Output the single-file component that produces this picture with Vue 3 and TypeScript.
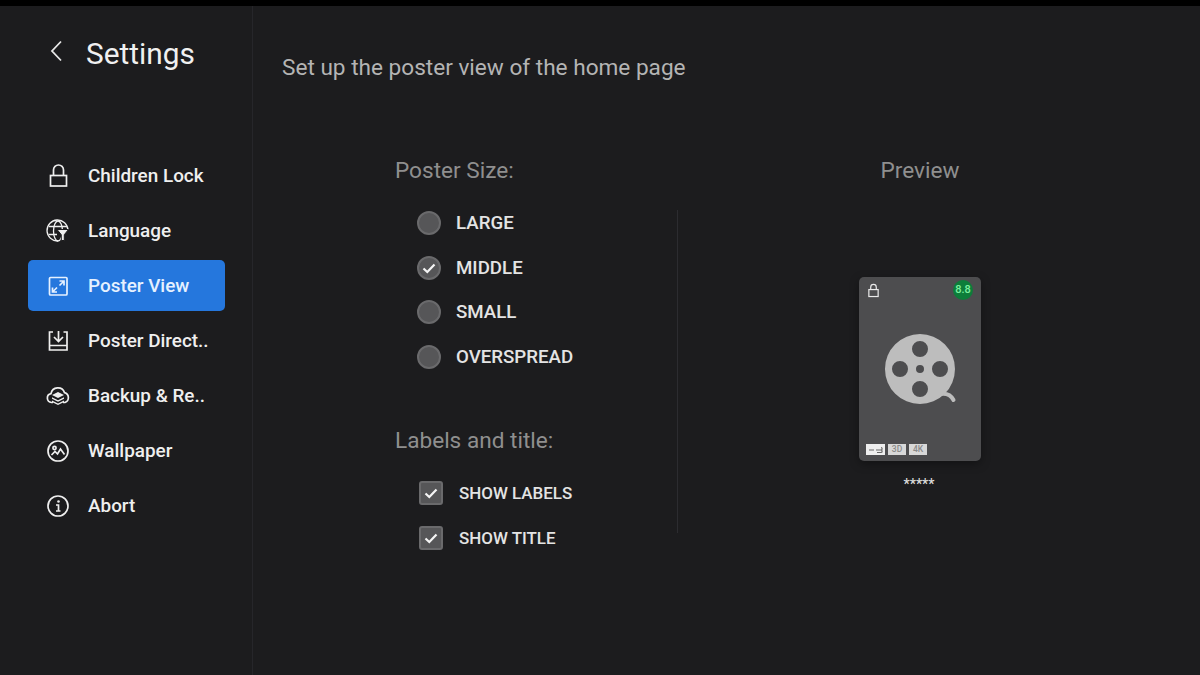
<script setup lang="ts">
interface MenuItem { label: string; icon: string; active?: boolean }
const menu: MenuItem[] = [
  { label: 'Children Lock', icon: 'lock' },
  { label: 'Language', icon: 'globe' },
  { label: 'Poster View', icon: 'expand', active: true },
  { label: 'Poster Direct..', icon: 'download' },
  { label: 'Backup & Re..', icon: 'cloud' },
  { label: 'Wallpaper', icon: 'picture' },
  { label: 'Abort', icon: 'info' },
]
const sizes = [
  { label: 'LARGE', checked: false },
  { label: 'MIDDLE', checked: true },
  { label: 'SMALL', checked: false },
  { label: 'OVERSPREAD', checked: false },
]
const labels = ['SHOW LABELS', 'SHOW TITLE']
</script>

<template>
  <div class="screen">
    <aside class="sidebar">
      <header class="head">
        <svg class="back" viewBox="0 0 14 24" width="14" height="24"><path d="M12 2.5 3 12l9 9.5" /></svg>
        <h1>Settings</h1>
      </header>
      <nav class="menu">
        <div v-for="item in menu" :key="item.label" class="item" :class="{ active: item.active }">
          <svg class="icon" viewBox="0 0 24 24" width="24" height="24">
            <g v-if="item.icon === 'lock'">
              <rect x="4.500" y="11.500" width="16" height="10.500" />
              <path d="M7.500 11.500V6a5 5 0 0 1 10 0v5.500" />
            </g>
            <g v-else-if="item.icon === 'globe'">
              <path d="M12 22a10.500 10.500 0 1 1 10-11" stroke-width="1.300" />
              <ellipse cx="12" cy="12" rx="4.500" ry="10" stroke-width="1.300" />
              <path d="M3 7.500h18M2.500 15.500H11" stroke-width="1.300" />
              <path class="knock" d="M11 10.500h11.500l-4.200 5.200v5.800h-3v-5.800z" />
            </g>
            <g v-else-if="item.icon === 'expand'">
              <rect x="3.500" y="3.500" width="17.500" height="17.500" rx="1" />
              <path d="M13.500 7h4.500v4.500M18 7l-4.500 4.500M11 18H6.500v-4.500M6.500 18l4.500-4.500" />
            </g>
            <g v-else-if="item.icon === 'download'">
              <path d="M7 3H3.500v18h17.500V3h-3.500" />
              <path d="M12.500 2v10M8 8l4.500 4.500L17 8M3.500 16.500h17.500" />
            </g>
            <g v-else-if="item.icon === 'cloud'">
              <path d="M7 18.500H5.500a4.500 4.500 0 0 1-.5-8.900 7 7 0 0 1 13.500-1 5.200 5.200 0 0 1 .5 9.900H17" />
              <path class="fill" d="m12 8 6 3-6 3-6-3zM6 13.200l6 3 6-3v1.600l-6 3-6-3zM6 16.600l6 3 6-3v1.400l-6 3-6-3z" />
            </g>
            <g v-else-if="item.icon === 'picture'">
              <circle cx="12" cy="12" r="10" />
              <circle cx="8.500" cy="9" r="1.600" />
              <path d="m5.500 16 3.500-3.500 2.500 2.500 3-5 4 5.500" />
            </g>
            <g v-else>
              <circle cx="12" cy="12" r="10" />
              <circle class="fill" cx="12.500" cy="7.500" r="1.300" />
              <path d="M10 11h2.500v5.500M10 17h4.500" />
            </g>
          </svg>
          <span>{{ item.label }}</span>
        </div>
      </nav>
    </aside>

    <main class="main">
      <h2 class="title">Set up the poster view of the home page</h2>
      <div class="columns">
        <section class="options">
          <h3>Poster Size:</h3>
          <ul class="radios">
            <li v-for="s in sizes" :key="s.label">
              <span class="radio">
                <svg v-if="s.checked" viewBox="0 0 24 24" width="24" height="24"><path class="tick" d="m6.500 12.500 3.800 3.500 7.200-7.500" /></svg>
              </span>
              <span>{{ s.label }}</span>
            </li>
          </ul>
          <h3 class="second">Labels and title:</h3>
          <ul class="checks">
            <li v-for="l in labels" :key="l">
              <span class="check">
                <svg viewBox="0 0 24 24" width="24" height="24"><path class="tick" d="m6.500 12.500 3.800 3.500 7.200-7.500" /></svg>
              </span>
              <span>{{ l }}</span>
            </li>
          </ul>
        </section>
        <section class="preview">
          <h3>Preview</h3>
          <div class="poster">
            <div class="poster-top">
              <svg viewBox="0 0 14 16" width="13" height="15" class="mini-lock">
                <rect x="2" y="7" width="10" height="7.500" />
                <path d="M4 7V4.500a3 3 0 0 1 6 0V7" />
              </svg>
              <span class="score">8.8</span>
            </div>
            <svg class="reel" viewBox="0 0 80 80" width="80" height="80">
              <path class="tail" d="M60 65c6-1 11 1 13.500 6" />
              <path fill-rule="evenodd" class="reel-body" d="M40 5a35 35 0 1 0 0 70 35 35 0 0 0 0-70zM40 12a8 8 0 1 1 0 16 8 8 0 0 1 0-16zM20 32a8 8 0 1 1 0 16 8 8 0 0 1 0-16zM60 32a8 8 0 1 1 0 16 8 8 0 0 1 0-16zM40 36a4 4 0 1 1 0 8 4 4 0 0 1 0-8zM40 52a8 8 0 1 1 0 16 8 8 0 0 1 0-16z" />
            </svg>
            <div class="tags">
              <span class="tag wide">
                <svg viewBox="0 0 18 10" width="18" height="10"><path d="M2 5h5M9 5h5c1.500 0 1.500-2.500 0-2.500M14 5c1.500 0 1.500 2.500 0 2.500H10" /></svg>
              </span>
              <span class="tag">3D</span>
              <span class="tag">4K</span>
            </div>
          </div>
          <div class="stars">*****</div>
        </section>
      </div>
    </main>
  </div>
</template>

<style>
html, body { margin: 0; background: #000; }
</style>

<style scoped>
.screen {
  width: 1200px;
  height: 675px;
  box-sizing: border-box;
  border-top: 6px solid #000;
  background: #1c1c1e;
  display: flex;
  overflow: hidden;
  font-family: Roboto, "Liberation Sans", sans-serif;
}
.sidebar {
  width: 253px;
  flex: none;
  box-sizing: border-box;
  border-right: 1px solid #26262a;
}
.head {
  height: 144px;
  box-sizing: border-box;
  padding: 32px 0 0 49px;
  display: flex;
  align-items: flex-start;
  gap: 23px;
}
.back { margin-top: 1px; fill: none; stroke: #e8e8e8; stroke-width: 1.800; }
h1 {
  margin: 0;
  font-size: 29.800px;
  line-height: 32px;
  font-weight: 400;
  color: #f0f0f0;
}
.menu { display: flex; flex-direction: column; gap: 4px; }
.item {
  width: 197px;
  height: 51px;
  margin-left: 28px;
  padding-left: 18px;
  box-sizing: border-box;
  border-radius: 5px;
  display: flex;
  align-items: center;
  gap: 18px;
  font-size: 18.900px;
  font-weight: 500;
  color: #efefef;
}
.item.active { background: #2577dd; color: #e6f1ff; }
.icon { flex: none; fill: none; stroke: currentColor; stroke-width: 1.700; }
.icon .fill { fill: currentColor; stroke: none; }
.icon .knock { fill: currentColor; stroke: #1c1c1e; stroke-width: 1; }
.main { flex: 1; min-width: 0; }
.title {
  margin: 47px 0 0 29px;
  font-size: 22.600px;
  line-height: 30px;
  font-weight: 400;
  color: #b4b4b4;
}
.columns { display: flex; margin: 74px 0 0 142px; }
h3 {
  margin: 0;
  font-size: 22.600px;
  line-height: 28px;
  font-weight: 400;
  color: #8f8f8f;
}
.options { width: 282px; flex: none; box-sizing: border-box; }
ul { list-style: none; margin: 0; padding: 0; }
.radios { margin-top: 16px; }
.radios li {
  height: 44.600px;
  display: flex;
  align-items: center;
  margin-left: 22px;
  gap: 15px;
  font-size: 18.700px;
  font-weight: 500;
  color: #e4e4e4;
}
.radio {
  width: 24px;
  height: 24px;
  box-sizing: border-box;
  border-radius: 50%;
  background: #565658;
  border: 2px solid #6a6a6c;
  display: flex;
  align-items: center;
  justify-content: center;
  flex: none;
}
.radio svg, .check svg { flex: none; }
.tick { fill: none; stroke: #f5f5f5; stroke-width: 2.200; }
.second { margin-top: 48px; }
.checks { margin-top: 15.600px; }
.checks li {
  height: 44.500px;
  display: flex;
  align-items: center;
  margin-left: 24px;
  gap: 16px;
  font-size: 16.950px;
  font-weight: 500;
  color: #e4e4e4;
}
.check {
  width: 24px;
  height: 24px;
  box-sizing: border-box;
  border-radius: 3px;
  background: #565658;
  border: 2px solid #6a6a6c;
  display: flex;
  align-items: center;
  justify-content: center;
  flex: none;
}
.preview {
  width: 485px;
  flex: none;
  box-sizing: border-box;
  border-left: 1px solid #2c2c30;
  margin-top: 53px;
  height: 323px;
  display: flex;
  flex-direction: column;
  align-items: center;
  position: relative;
  padding-top: 67px;
}
.preview h3 {
  position: absolute;
  top: -53px;
  left: 0;
  right: 0;
  text-align: center;
  color: #8f8f8f;
}
.poster {
  width: 122px;
  height: 184px;
  box-sizing: border-box;
  border-radius: 5px;
  background: #4d4d4f;
  box-shadow: 0 3px 10px rgba(0, 0, 0, 0.35);
  padding: 3px 8px 6px 8px;
  display: flex;
  flex-direction: column;
  align-items: center;
}
.poster-top {
  align-self: stretch;
  display: flex;
  justify-content: space-between;
  align-items: center;
  height: 20px;
}
.mini-lock { fill: none; stroke: #eaeaea; stroke-width: 1.300; }
.score {
  width: 20px;
  height: 20px;
  border-radius: 50%;
  background: #0d7d3a;
  color: #7df0a0;
  font-size: 11px;
  font-weight: 500;
  line-height: 20px;
  text-align: center;
}
.reel { margin-top: 29px; flex: none; }
.reel-body { fill: #bdbdbd; }
.tail { fill: none; stroke: #bdbdbd; stroke-width: 4; stroke-linecap: round; }
.tags {
  align-self: stretch;
  margin-top: auto;
  margin-left: -1px;
  display: flex;
  gap: 3px;
}
.tag {
  width: 18px;
  height: 11px;
  background: #d8d8d8;
  color: #8a8a8a;
  font-size: 8.500px;
  font-weight: 500;
  line-height: 11px;
  text-align: center;
  display: flex;
  align-items: center;
  justify-content: center;
}
.tag.wide { background: #eeeeee; width: 19px; }
.tag.wide svg { fill: none; stroke: #666; stroke-width: 1.200; }
.stars {
  margin-top: 14px;
  margin-right: 2px;
  color: #dcdcdc;
  font-size: 14px;
  line-height: 18px;
  font-weight: 500;
}
</style>
